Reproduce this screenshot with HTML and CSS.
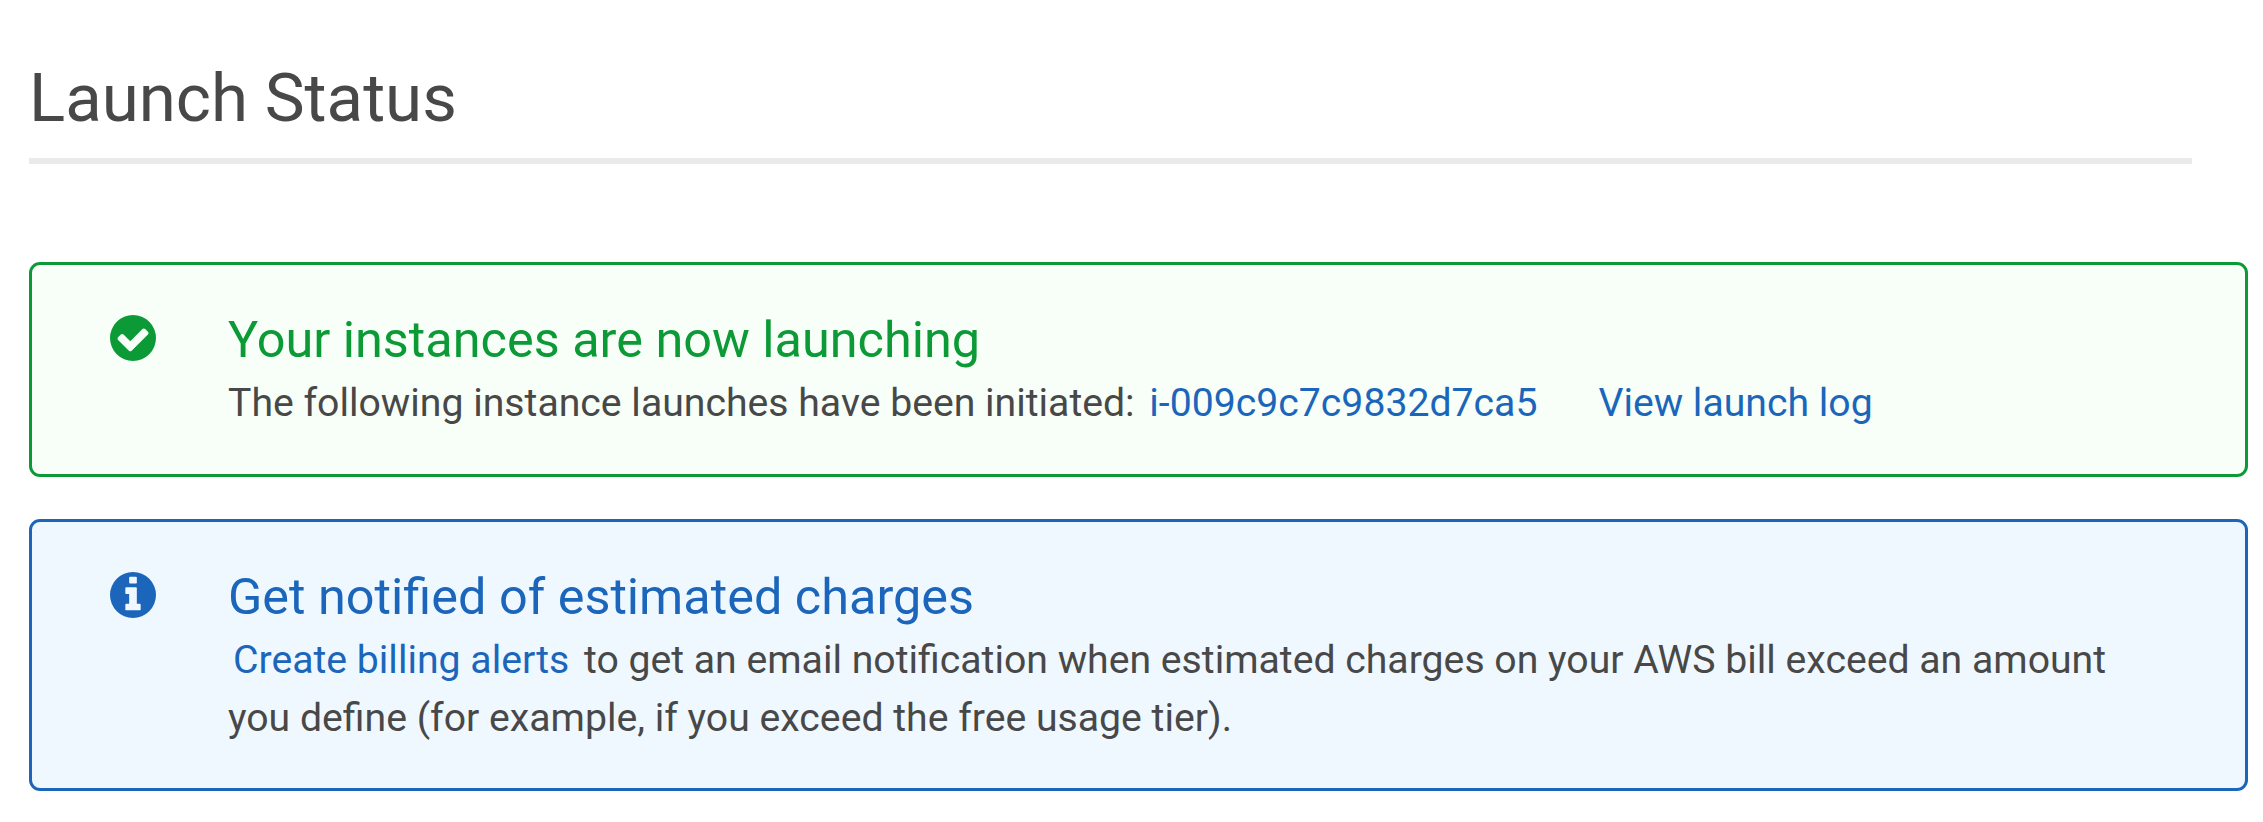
FILE: index.html
```
<!DOCTYPE html>
<html lang="en">
<head>
<meta charset="utf-8">
<title>Launch Status</title>
<link rel="stylesheet" href="styles.css">
</head>
<body>
<main class="page">
  <header class="page-header"><h1 class="title">Launch Status</h1></header>
  <section class="alert alert-success">
    <svg class="icon" viewBox="0 0 1536 1536" aria-hidden="true"><path fill="currentColor" fill-rule="evenodd" d="M1284 606q0-28-18-46l-91-90q-19-19-45-19t-45 19l-408 407-226-226q-19-19-45-19t-45 19l-91 90q-18 18-18 46 0 27 18 45l362 362q19 19 45 19 27 0 46-19l543-543q18-18 18-45zM1536 768a768 768 0 1 1-1536 0a768 768 0 1 1 1536 0z"/></svg>
    <div class="body">
      <h2 class="heading">Your instances are now launching</h2>
      <p class="text">The following instance launches have been initiated: <a class="link instance">i-009c9c7c9832d7ca5</a><a class="link log">View launch log</a></p>
    </div>
  </section>
  <section class="alert alert-info">
    <svg class="icon" viewBox="0 0 1536 1536" aria-hidden="true"><path fill="currentColor" fill-rule="evenodd" d="M1024 1248v-160q0-14-9-23t-23-9h-96v-512q0-14-9-23t-23-9h-320q-14 0-23 9t-9 23v160q0 14 9 23t23 9h96v320h-96q-14 0-23 9t-9 23v160q0 14 9 23t23 9h448q14 0 23-9t9-23zM896 352v-160q0-14-9-23t-23-9h-192q-14 0-23 9t-9 23v160q0 14 9 23t23 9h192q14 0 23-9t9-23zM1536 768a768 768 0 1 1-1536 0a768 768 0 1 1 1536 0z"/></svg>
    <div class="body">
      <h2 class="heading">Get notified of estimated charges</h2>
      <p class="text"><a class="link billing">Create billing alerts</a> to get an email notification when estimated charges on your AWS bill exceed an amount<br>you define (for example, if you exceed the free usage tier).</p>
    </div>
  </section>
</main>
</body>
</html>
```
FILE: styles.css
```
* { box-sizing: border-box; }
body { margin: 0; background: #fff; color: #484848; font-family: Roboto, sans-serif; }
.page { padding: 58px 15px 0 29px; }
.page-header { width: 2163px; height: 106px; border-bottom: 6px solid #eaeaea; margin-bottom: 98px; }
.title { margin: 0; font-size: 67.2px; line-height: 80px; font-weight: 400; }
.alert { display: flex; border: 3px solid; border-radius: 11px; padding: 45px 78px 0; }
.alert-success { height: 215px; color: #0c9a37; background: #f7fff8; margin-bottom: 42px; }
.alert-info { height: 272px; color: #1b66bb; background: #f0f8ff; }
.icon { width: 46px; height: 46px; margin-top: 5px; flex: none; }
.body { margin-left: 72px; white-space: nowrap; }
.heading { margin: 0; font-size: 50.4px; line-height: 60px; font-weight: 400; }
.text { margin: 4px 0 0; color: #484848; font-size: 39.2px; line-height: 58px; }
.link { color: #1b66bb; }
.instance { margin-left: 5px; }
.log { margin-left: 61px; }
.billing { margin: 0 5px; }
```
